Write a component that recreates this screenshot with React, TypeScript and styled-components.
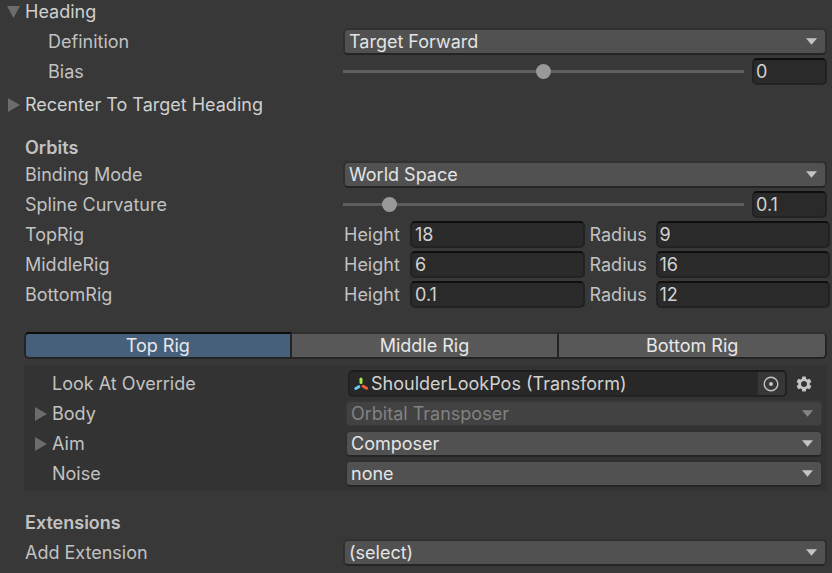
import { useState } from "react";
import type { ReactNode } from "react";
import styled, { createGlobalStyle, css } from "styled-components";

const GlobalStyle = createGlobalStyle`
  *, *::before, *::after { box-sizing: border-box; }
  html { background: #383838; }
  body {
    margin: 0;
    background: #383838;
    color: #c2c2c2;
    font: 400 18px/24px Inter, sans-serif;
  }
  button, input, select { font: inherit; color: inherit; }
`;

const Inspector = styled.main`
  display: flex;
  flex-direction: column;
`;

const Group = styled.section<{ $top?: number }>`
  display: flex;
  flex-direction: column;
  margin-top: ${(p) => p.$top ?? 0}px;
`;

const Row = styled.div<{ $wide?: boolean }>`
  display: grid;
  grid-template-columns: 318px minmax(0, 1fr);
  align-items: center;
  height: 30px;
  padding: 0 ${(p) => (p.$wide ? 2 : 5)}px 1px 25px;
`;

const Label = styled.label<{ $indent?: number }>`
  padding-left: ${(p) => p.$indent ?? 0}px;
  white-space: nowrap;
`;

const RowTitle = styled.span`
  white-space: nowrap;
`;

const SectionTitle = styled.h2<{ $gap?: number }>`
  margin: 0 0 ${(p) => p.$gap ?? 0}px;
  padding-left: 25px;
  font-size: 18px;
  line-height: 24px;
  font-weight: 600;
`;

const FoldoutButton = styled.button<{ $bright?: boolean }>`
  display: flex;
  align-items: center;
  gap: 5px;
  height: 24px;
  padding: 0 0 0 7px;
  border: 0;
  background: none;
  text-align: left;
  white-space: nowrap;
  color: ${(p) => (p.$bright ? "#d0d0d0" : "inherit")};
`;

const fieldFrame = css`
  width: 100%;
  min-width: 0;
  height: 27px;
  border: 2px solid #222;
  border-top-color: #0e0e0e;
  border-radius: 5px;
  background: #2a2a2a;
  color: #d2d2d2;
`;

const TextField = styled.input<{ $inset?: number }>`
  ${fieldFrame}
  padding: 0 ${(p) => p.$inset ?? 2}px;
  outline: 0;
`;

const SelectBox = styled.div`
  display: grid;
  align-items: center;
  > * { grid-area: 1 / 1; }
`;

const SelectControl = styled.select`
  appearance: none;
  width: 100%;
  height: 27px;
  padding: 0 24px 0 4px;
  border: 2px solid #303030;
  border-bottom-color: #242424;
  border-radius: 5px;
  background: #515151;
  color: #e4e4e4;
  outline: 0;
  &:disabled {
    border-color: #363636;
    background: #424242;
    color: #818181;
    opacity: 1;
  }
`;

const SelectArrow = styled.svg`
  justify-self: end;
  width: 11px;
  height: 7px;
  margin-right: 10px;
  fill: #c4c4c4;
  pointer-events: none;
  select:disabled + & { fill: #858585; }
`;

const SliderLine = styled.div`
  display: grid;
  grid-template-columns: minmax(0, 1fr) 75px;
  gap: 8px;
  align-items: center;
`;

const Slider = styled.input`
  appearance: none;
  width: 100%;
  height: 15px;
  margin: 0;
  background: linear-gradient(#5e5e5e, #5e5e5e) center / 100% 3px no-repeat;
  outline: 0;
  &::-webkit-slider-thumb {
    appearance: none;
    width: 15px;
    height: 15px;
    border-radius: 50%;
    background: #999;
  }
`;

const OrbitFields = styled.div`
  display: grid;
  grid-template-columns: 1fr 1fr;
  gap: 4px;
`;

const OrbitField = styled.label`
  display: grid;
  grid-template-columns: 66px minmax(0, 1fr);
  align-items: center;
  padding-left: 1px;
`;

const Tabs = styled.div`
  display: grid;
  grid-template-columns: repeat(3, 1fr);
  height: 27px;
  margin: 22px 5px 0 24px;
`;

const Tab = styled.button`
  padding: 0;
  border: 2px solid #242424;
  border-top-color: #303030;
  border-left-width: 0;
  background: #585858;
  color: #e8e8e8;
  line-height: 23px;
  &:first-child { border-left-width: 2px; border-radius: 5px 0 0 5px; }
  &:last-child { border-radius: 0 5px 5px 0; }
  &[aria-selected="true"] {
    border-top-color: #0c0c0c;
    background: #46607c;
  }
`;

const Panel = styled.div`
  display: flex;
  flex-direction: column;
  margin: 6px 5px 0 24px;
  padding: 4px 0 2px;
  background: #333;
`;

const PanelRow = styled.div`
  display: grid;
  grid-template-columns: 318px minmax(0, 1fr);
  align-items: center;
  height: 30px;
  padding: 0 4px 1px 3px;
`;

const ObjectLine = styled.div`
  display: grid;
  grid-template-columns: minmax(0, 1fr) 16px;
  gap: 9px;
  align-items: center;
  padding: 0 11px 0 3px;
`;

const ObjectField = styled.div`
  ${fieldFrame}
  display: grid;
  grid-template-columns: 16px minmax(0, 1fr) 27px;
  align-items: center;
  padding-left: 4px;
  border-top-color: #1c1c1c;
  background: #282828;
`;

const ObjectName = styled.input`
  width: 100%;
  height: 23px;
  padding: 0 0 0 1px;
  border: 0;
  background: none;
  outline: 0;
`;

const PickButton = styled.button`
  display: grid;
  place-items: center;
  height: 23px;
  padding: 0 1px 0 0;
  border: 0;
  border-radius: 0 3px 3px 0;
  background: #373737;
  color: #c4c4c4;
`;

const GearButton = styled.button`
  display: grid;
  place-items: center;
  padding: 0;
  border: 0;
  background: none;
  color: #c4c4c4;
`;

function FoldArrow({ open }: { open?: boolean }) {
  return (
    <svg width="13" height="14" viewBox="0 0 13 14" fill="#6c6c6c" aria-hidden="true">
      <path d={open ? "M0 1H13L6.500 13Z" : "M1 0L13 7L1 14Z"} />
    </svg>
  );
}

function Foldout({ open, bright, children }: { open?: boolean; bright?: boolean; children: ReactNode }) {
  return (
    <FoldoutButton type="button" aria-expanded={!!open} $bright={bright}>
      <FoldArrow open={open} />
      {children}
    </FoldoutButton>
  );
}

function Dropdown({ id, label, value, disabled }: { id: string; label?: string; value: string; disabled?: boolean }) {
  return (
    <SelectBox>
      <SelectControl id={id} aria-label={label} defaultValue={value} disabled={disabled}>
        <option>{value}</option>
      </SelectControl>
      <SelectArrow viewBox="0 0 11 7" aria-hidden="true">
        <path d="M0 0.300H11L5.500 6.800Z" />
      </SelectArrow>
    </SelectBox>
  );
}

function SliderRow({ id, label, indent, min, max, initial }: {
  id: string; label: string; indent?: number; min: number; max: number; initial: number;
}) {
  const [value, setValue] = useState(String(initial));
  return (
    <Row>
      <Label htmlFor={id} $indent={indent}>{label}</Label>
      <SliderLine>
        <Slider id={id} type="range" min={min} max={max} step={0.01} value={Number(value) || 0}
          onChange={(e) => setValue(e.target.value)} />
        <TextField aria-label={`${label} value`} value={value} onChange={(e) => setValue(e.target.value)} />
      </SliderLine>
    </Row>
  );
}

function TransformIcon() {
  return (
    <svg width="16" height="16" viewBox="0 0 16 16" strokeWidth="3" strokeLinecap="round" aria-hidden="true">
      <path d="M7 3V6.500" stroke="#a4ea4e" />
      <path d="M4.800 10.700L1.800 12.500" stroke="#6cc8ee" />
      <path d="M9.200 10.200L12.600 12.200" stroke="#ee6038" />
    </svg>
  );
}

function TargetIcon() {
  return (
    <svg width="16" height="16" viewBox="0 0 16 16" aria-hidden="true">
      <circle cx="8" cy="8" r="6.800" fill="none" stroke="currentColor" strokeWidth="1.400" />
      <circle cx="8" cy="8" r="2" fill="currentColor" />
    </svg>
  );
}

function GearIcon() {
  return (
    <svg width="16" height="16" viewBox="0 0 16 16" aria-hidden="true">
      <g fill="currentColor">
        {[0, 60, 120].map((angle) => (
          <rect key={angle} x="6" y="0.500" width="4" height="15" rx="0.800" transform={`rotate(${angle} 8 8)`} />
        ))}
      </g>
      <circle cx="8" cy="8" r="4.300" fill="#333" stroke="currentColor" strokeWidth="3" />
      <circle cx="8" cy="8" r="2.700" fill="#333" />
    </svg>
  );
}

const orbits = [
  { name: "TopRig", height: "18", radius: "9" },
  { name: "MiddleRig", height: "6", radius: "16" },
  { name: "BottomRig", height: "0.1", radius: "12" },
];

const rigs = ["Top Rig", "Middle Rig", "Bottom Rig"];

export default function App() {
  const [rig, setRig] = useState(rigs[0]);
  return (
    <>
      <GlobalStyle />
      <Inspector>
        <Foldout open bright>Heading</Foldout>
        <Group $top={3}>
          <Row>
            <Label htmlFor="definition" $indent={23}>Definition</Label>
            <Dropdown id="definition" value="Target Forward" />
          </Row>
          <SliderRow id="bias" label="Bias" indent={23} min={-180} max={180} initial={0} />
        </Group>
        <Group $top={6}>
          <Foldout bright>Recenter To Target Heading</Foldout>
        </Group>

        <Group $top={19}>
          <SectionTitle>Orbits</SectionTitle>
          <Row>
            <Label htmlFor="binding">Binding Mode</Label>
            <Dropdown id="binding" value="World Space" />
          </Row>
          <SliderRow id="curvature" label="Spline Curvature" min={0} max={1} initial={0.1} />
          {orbits.map((o) => (
            <Row key={o.name} $wide>
              <RowTitle>{o.name}</RowTitle>
              <OrbitFields>
                <OrbitField>Height<TextField $inset={3} defaultValue={o.height} /></OrbitField>
                <OrbitField>Radius<TextField defaultValue={o.radius} /></OrbitField>
              </OrbitFields>
            </Row>
          ))}
        </Group>

        <Tabs role="tablist">
          {rigs.map((name) => (
            <Tab key={name} type="button" role="tab" aria-selected={rig === name} onClick={() => setRig(name)}>
              {name}
            </Tab>
          ))}
        </Tabs>
        <Panel role="tabpanel">
          <PanelRow>
            <Label htmlFor="lookat" $indent={25}>Look At Override</Label>
            <ObjectLine>
              <ObjectField>
                <TransformIcon />
                <ObjectName id="lookat" readOnly value="ShoulderLookPos (Transform)" />
                <PickButton type="button" aria-label="Pick object"><TargetIcon /></PickButton>
              </ObjectField>
              <GearButton type="button" aria-label="Options"><GearIcon /></GearButton>
            </ObjectLine>
          </PanelRow>
          <PanelRow>
            <Foldout>Body</Foldout>
            <Dropdown id="body" label="Body" value="Orbital Transposer" disabled />
          </PanelRow>
          <PanelRow>
            <Foldout>Aim</Foldout>
            <Dropdown id="aim" label="Aim" value="Composer" />
          </PanelRow>
          <PanelRow>
            <Label htmlFor="noise" $indent={25}>Noise</Label>
            <Dropdown id="noise" value="none" />
          </PanelRow>
        </Panel>

        <Group $top={20}>
          <SectionTitle $gap={3}>Extensions</SectionTitle>
          <Row>
            <Label htmlFor="extension">Add Extension</Label>
            <Dropdown id="extension" value="(select)" />
          </Row>
        </Group>
      </Inspector>
    </>
  );
}
